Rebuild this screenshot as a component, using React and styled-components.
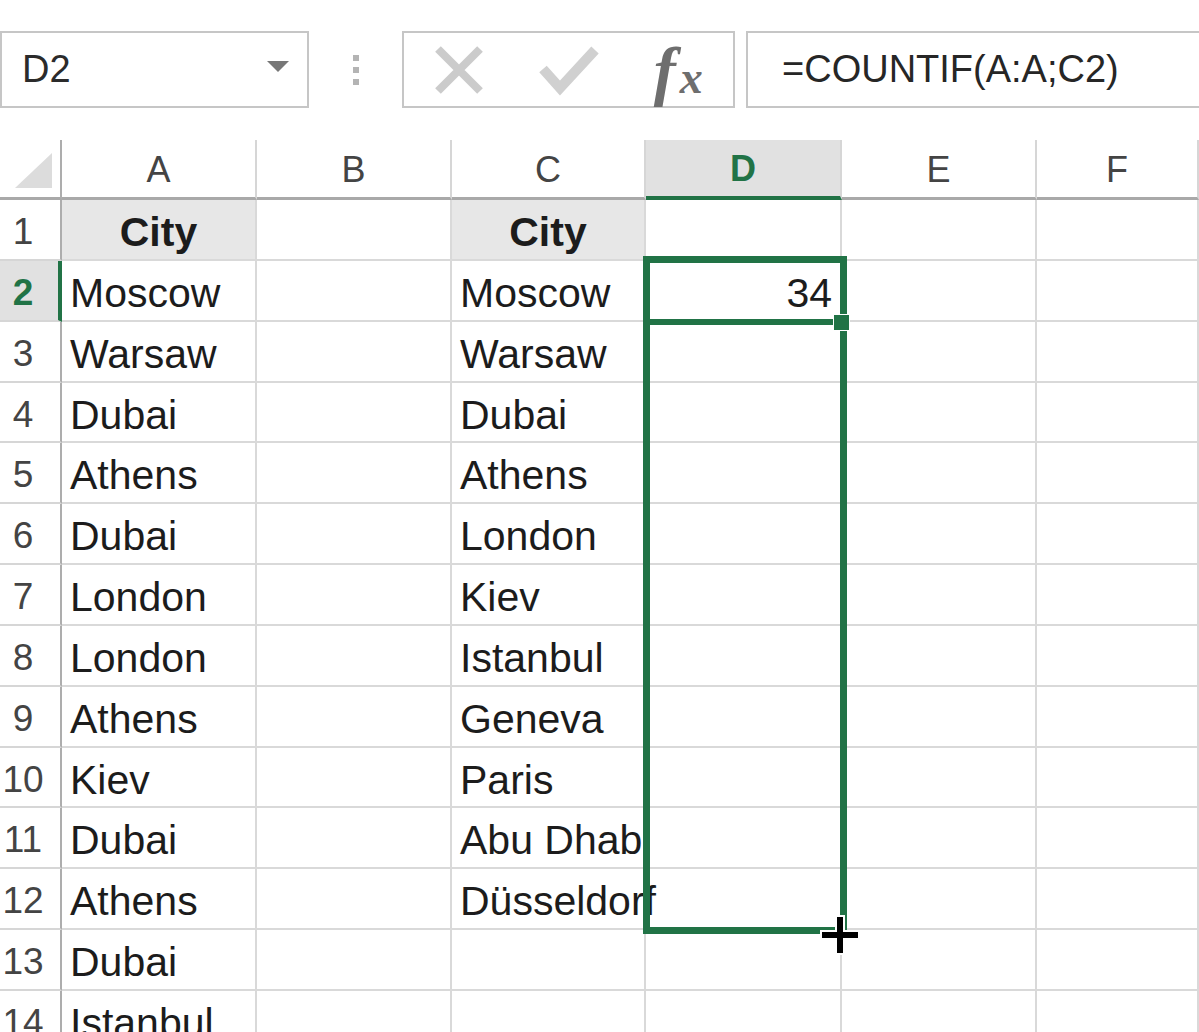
import React from 'react';
import styled, { createGlobalStyle } from 'styled-components';

const GREEN = '#217346';

const GlobalStyle = createGlobalStyle`
  html, body {
    margin: 0;
    padding: 0;
    background: #fff;
    overflow: hidden;
  }
  body {
    font-family: "Liberation Sans", Arial, sans-serif;
  }
`;

const Page = styled.div`
  width: 100vw;
  height: 100vh;
  overflow: hidden;
  background: #fff;
`;

/* ---------- formula bar ---------- */

const Bar = styled.div`
  display: flex;
  height: 77px;
  margin-top: 31px;
  box-sizing: border-box;
`;

const NameBox = styled.div`
  width: 309px;
  box-sizing: border-box;
  border: 2px solid #c6c6c6;
  display: flex;
  align-items: center;
  justify-content: space-between;
  padding: 0 18px 0 20px;
  font-size: 38px;
  color: #2b2b2b;
`;

const DropArrow = styled.span`
  width: 0;
  height: 0;
  border-left: 11px solid transparent;
  border-right: 11px solid transparent;
  border-top: 11px solid #777;
  margin-top: -6px;
`;

const Grip = styled.div`
  width: 93px;
  display: flex;
  flex-direction: column;
  align-items: center;
  justify-content: center;
  gap: 6px;
`;

const GripDot = styled.span`
  width: 6px;
  height: 6px;
  background: #b4b4b4;
`;

const FuncBox = styled.div`
  width: 333px;
  box-sizing: border-box;
  border: 2px solid #c6c6c6;
  display: flex;
  align-items: center;
`;

const IconSlot = styled.div`
  width: 110px;
  height: 100%;
  display: flex;
  align-items: center;
  justify-content: center;
`;

const FxMark = styled.span`
  font-family: "Liberation Serif", "Times New Roman", serif;
  font-style: italic;
  color: #6e6e6e;
  display: flex;
  align-items: baseline;
  margin-top: 2px;
`;

const FxF = styled.span`
  font-size: 66px;
  font-weight: bold;
  margin-right: 4px;
`;

const FxX = styled.span`
  font-size: 46px;
  font-weight: bold;
`;

const FormulaInput = styled.div`
  flex: 1;
  margin-left: 11px;
  margin-right: -4px;
  box-sizing: border-box;
  border: 2px solid #c6c6c6;
  display: flex;
  align-items: center;
  padding-left: 34px;
  font-size: 38px;
  color: #262626;
  white-space: nowrap;
`;

/* ---------- sheet ---------- */

const Sheet = styled.div`
  position: relative;
  margin-top: 32px;
  display: grid;
  grid-template-columns: 62px 195px 195px 194px 196px 195px 1fr;
  grid-template-rows: 60px repeat(14, 60.85px);
`;

const Corner = styled.div`
  box-sizing: border-box;
  border-right: 2px solid #adadad;
  border-bottom: 3px solid #a9a9a9;
  display: flex;
  align-items: flex-end;
  justify-content: flex-end;
  padding: 0 8px 9px 0;
`;

const CornerTriangle = styled.span`
  width: 37px;
  height: 35px;
  background: #dcdcdc;
  clip-path: polygon(100% 0, 100% 100%, 0 100%);
`;

const ColHead = styled.div`
  box-sizing: border-box;
  border-right: 2px solid #d6d6d6;
  border-bottom: ${p => (p.$active ? `4px solid ${GREEN}` : '3px solid #a9a9a9')};
  background: ${p => (p.$active ? '#e1e1e1' : '#fff')};
  color: ${p => (p.$active ? GREEN : '#444')};
  font-weight: ${p => (p.$active ? 'bold' : 'normal')};
  font-size: 36px;
  display: flex;
  align-items: center;
  justify-content: center;
  padding-top: 2px;
`;

const RowHead = styled.div`
  box-sizing: border-box;
  border-right: ${p => (p.$active ? `4px solid ${GREEN}` : '2px solid #adadad')};
  border-bottom: 2px solid #d6d6d6;
  background: ${p => (p.$active ? '#e1e1e1' : '#fff')};
  color: ${p => (p.$active ? GREEN : '#444')};
  font-weight: ${p => (p.$active ? 'bold' : 'normal')};
  font-size: 37px;
  line-height: 60px;
  text-align: center;
  padding-right: ${p => (p.$active ? '12px' : '14px')};
  padding-top: 2px;
  white-space: nowrap;
`;

const Cell = styled.div`
  position: relative;
  box-sizing: border-box;
  border-right: 2px solid #d9d9d9;
  border-bottom: 2px solid #d9d9d9;
  background: ${p => (p.$fill ? '#e7e7e7' : 'transparent')};
  font-size: 41px;
  font-weight: ${p => (p.$bold ? 'bold' : 'normal')};
  color: #1c1c1c;
  line-height: 60px;
  padding: 2px 8px 0 8px;
  text-align: ${p => p.$align || 'left'};
  white-space: nowrap;
  overflow: visible;
`;

/* ---------- selection overlay ---------- */

const Range = styled.div`
  position: absolute;
  left: 643px;
  top: 116px;
  width: 204px;
  height: 678px;
  box-sizing: border-box;
  border: 7px solid ${GREEN};
  pointer-events: none;
`;

const ActiveLine = styled.div`
  position: absolute;
  left: 649px;
  top: 179px;
  width: 186px;
  height: 6px;
  background: ${GREEN};
`;

const FillHandle = styled.div`
  position: absolute;
  left: 833px;
  top: 174px;
  width: 15px;
  height: 15px;
  background: ${GREEN};
  border: 1px solid #fff;
`;

const Cursor = styled.svg`
  position: absolute;
  left: 816px;
  top: 771px;
`;

const colA = ['City', 'Moscow', 'Warsaw', 'Dubai', 'Athens', 'Dubai', 'London', 'London', 'Athens', 'Kiev', 'Dubai', 'Athens', 'Dubai', 'Istanbul'];
const colC = ['City', 'Moscow', 'Warsaw', 'Dubai', 'Athens', 'London', 'Kiev', 'Istanbul', 'Geneva', 'Paris', 'Abu Dhabi', 'Düsseldorf', '', ''];
const columns = ['A', 'B', 'C', 'D', 'E', 'F'];

function CancelIcon() {
  return (
    <svg width="52" height="50" viewBox="0 0 52 50">
      <path d="M5 4 L47 46 M47 4 L5 46" stroke="#cbcbcb" strokeWidth="8" fill="none" />
    </svg>
  );
}

function EnterIcon() {
  return (
    <svg width="60" height="52" viewBox="0 0 60 52">
      <polyline points="4,25 21,44 56,6" stroke="#d0d0d0" strokeWidth="10" fill="none" />
    </svg>
  );
}

function CrossCursor() {
  return (
    <Cursor width="48" height="48" viewBox="0 0 48 48">
      <rect x="4" y="19" width="40" height="10" fill="#fff" />
      <rect x="19" y="4" width="10" height="40" fill="#fff" />
      <rect x="6" y="21" width="36" height="6" fill="#000" />
      <rect x="21" y="6" width="6" height="36" fill="#000" />
    </Cursor>
  );
}

export default function App() {
  return (
    <Page>
      <GlobalStyle />
      <Bar>
        <NameBox>
          <span>D2</span>
          <DropArrow />
        </NameBox>
        <Grip>
          <GripDot />
          <GripDot />
          <GripDot />
        </Grip>
        <FuncBox>
          <IconSlot><CancelIcon /></IconSlot>
          <IconSlot><EnterIcon /></IconSlot>
          <IconSlot>
            <FxMark><FxF>f</FxF><FxX>x</FxX></FxMark>
          </IconSlot>
        </FuncBox>
        <FormulaInput>=COUNTIF(A:A;C2)</FormulaInput>
      </Bar>

      <Sheet>
        <Corner><CornerTriangle /></Corner>
        {columns.map(c => (
          <ColHead key={c} $active={c === 'D'}>{c}</ColHead>
        ))}
        {colA.map((a, i) => {
          const row = i + 1;
          const header = row === 1;
          return (
            <React.Fragment key={row}>
              <RowHead $active={row === 2}>{row}</RowHead>
              <Cell $bold={header} $fill={header} $align={header ? 'center' : 'left'}>{a}</Cell>
              <Cell />
              <Cell $bold={header} $fill={header} $align={header ? 'center' : 'left'}>{colC[i]}</Cell>
              <Cell $align="right">{row === 2 ? '34' : ''}</Cell>
              <Cell />
              <Cell />
            </React.Fragment>
          );
        })}
        <Range />
        <ActiveLine />
        <FillHandle />
        <CrossCursor />
      </Sheet>
    </Page>
  );
}
